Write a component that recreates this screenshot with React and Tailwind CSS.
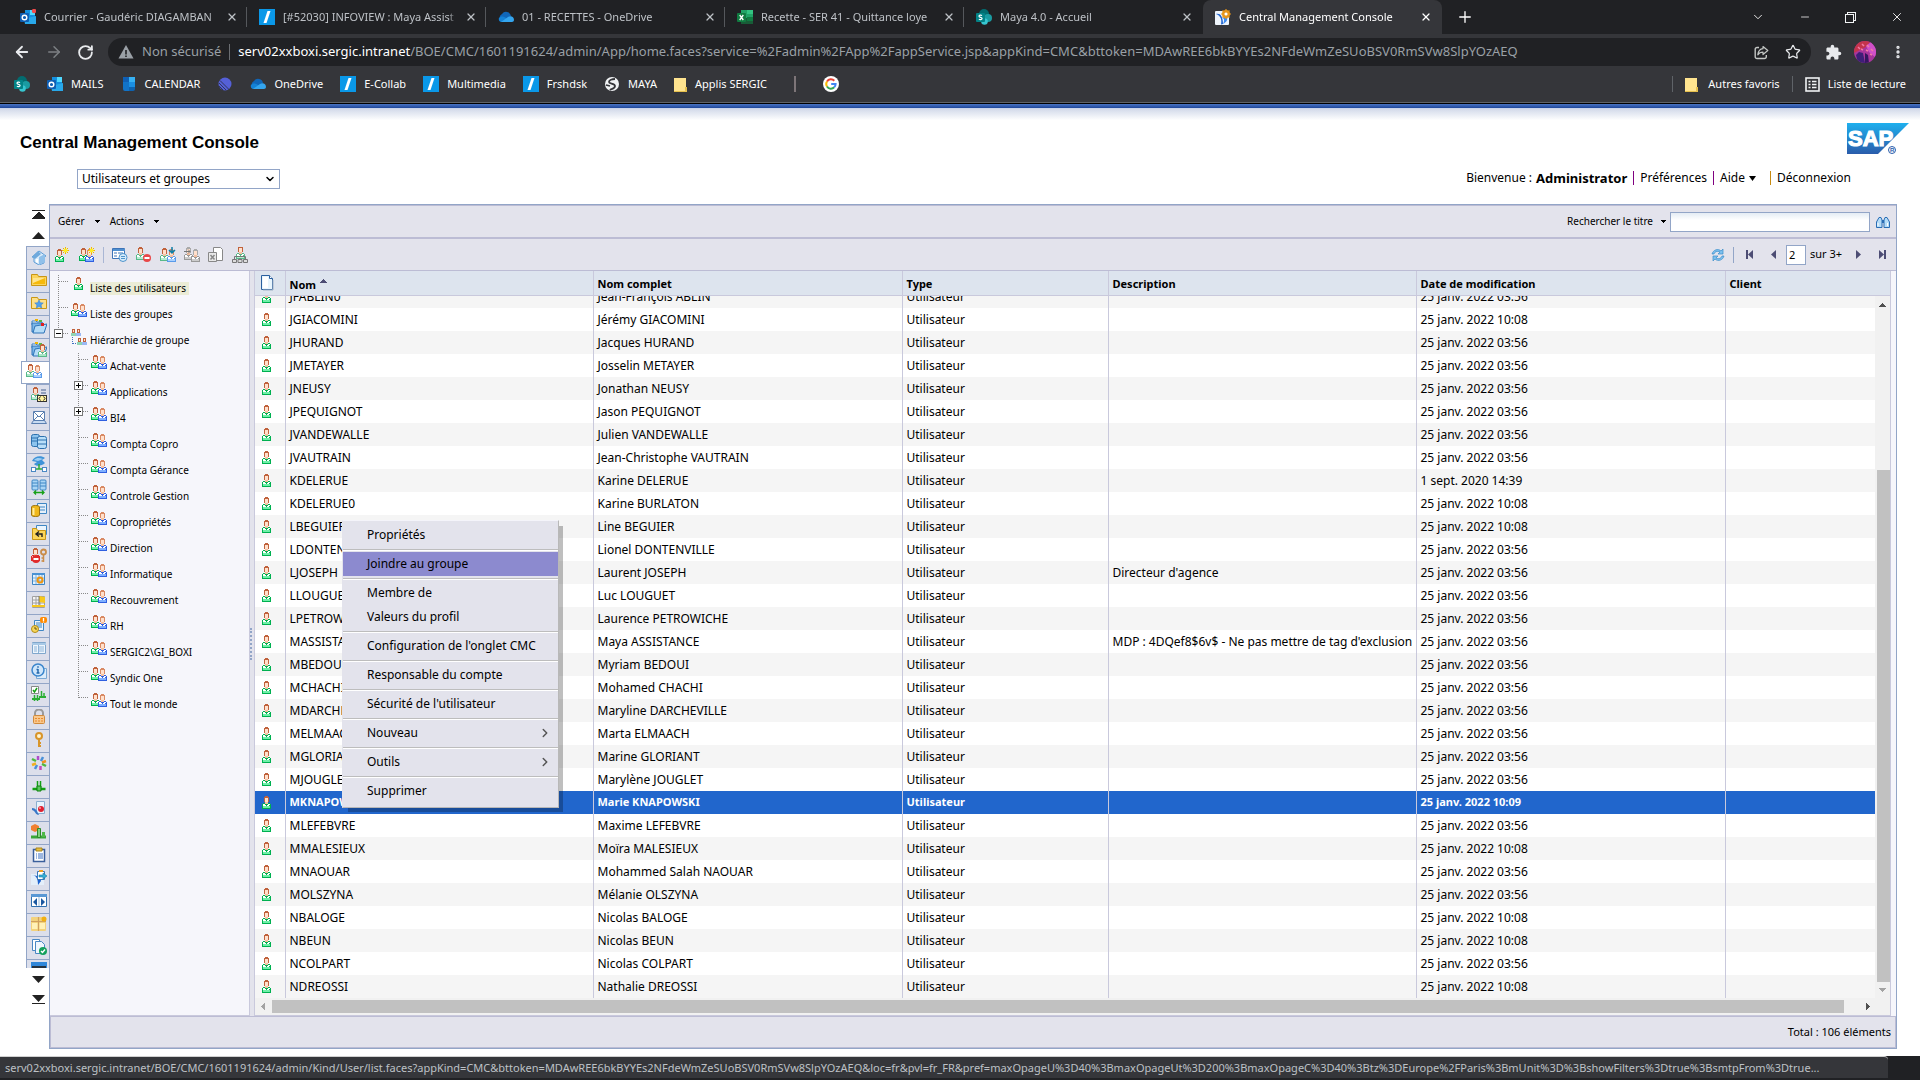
import React from "react";
import { ArrowLeft, ArrowRight, RotateCw, X, Plus, ChevronDown, ChevronRight, Star, MoreVertical, Minus } from "lucide-react";
import { MdExtension } from "react-icons/md";

/* ---------- shared icon pieces ---------- */

function Svg({ w = 16, h = 16, children, crisp = false, className = "" }) {
  return (
    <svg
      width={w}
      height={h}
      viewBox={`0 0 ${w} ${h}`}
      className={`block shrink-0 ${className}`}
      shapeRendering={crisp ? "crispEdges" : "auto"}
      aria-hidden="true"
    >
      {children}
    </svg>
  );
}

function Person({ x = 0, y = 0, body = "#00b050", fill = "#6ef0a8", hair = "#c0623c" }) {
  return (
    <g transform={`translate(${x} ${y})`} shapeRendering="crispEdges">
      <path d="M3 0h3v1h1v5h-1v1h-3v-1h-1v-5h1z" fill={hair} />
      <path d="M3 2h3v4h-3z" fill="#ffe0cc" />
      <path d="M3 6h3v2h-3z" fill="#f4c0a0" />
      <path d="M1 7h2v1h3v-1h2v1h1v5h-9v-5h1z" fill={body} />
      <path d="M1 8h2v1h1v1h1v-1h1v-1h2v1h-1v3h-6v-3h-1z" fill="#fff" />
      <path d="M1 10h7v2h-7z" fill={fill} />
    </g>
  );
}

function UserIcon() {
  return <Svg w={9} h={13} crisp><Person /></Svg>;
}

function GroupIcon({ soft = false }) {
  return (
    <Svg w={16} h={15} crisp>
      <Person body={soft ? "#58b98a" : "#00b050"} fill={soft ? "#a9e6c6" : "#6ef0a8"} />
      <Person x={7} y={1} body={soft ? "#5a9bea" : "#2f5fe0"} fill={soft ? "#a9d0ff" : "#7fb0ff"} hair="#d98a64" />
    </Svg>
  );
}

function HierarchyIcon() {
  const Small = ({ x, y }) => (
    <g transform={`translate(${x} ${y})`}>
      <path d="M1 0h3v4h-3z" fill="#c0623c" /><path d="M2 1h1v2h-1z" fill="#ffe0cc" /><path d="M0 4h5v3h-5z" fill="#8fd4b4" />
      <path d="M6 0h3v4h-3z" fill="#c0623c" /><path d="M7 1h1v2h-1z" fill="#ffe0cc" /><path d="M5 4h5v3h-5z" fill="#9ab8f4" />
    </g>
  );
  return (
    <Svg w={16} h={16} crisp>
      <Small x={0} y={0} /><Small x={6} y={9} />
      <path d="M1.5 8v7M2 14.5h4" stroke="#3d6fc0" strokeDasharray="1 1" fill="none" />
    </Svg>
  );
}

const sheetLine = "#3f86c4";

/* ---------- browser icons ---------- */

function Outlook({ dot = false }) {
  return (
    <Svg>
      <path d="M5 1h10v13H5z" fill="#1490df" /><path d="M10 1h5v5h-5z" fill="#50d9ff" /><path d="M4 10l12-3v8H5z" fill="#28a8ea" />
      <rect x="0" y="4" width="9" height="9" rx="1" fill="#0f5fb4" />
      <circle cx="4.5" cy="8.5" r="2.3" fill="none" stroke="#fff" strokeWidth="1.4" />
      {dot && <circle cx="14" cy="2" r="2.2" fill="#ef4b4b" />}
    </Svg>
  );
}
function Slash() {
  return <Svg><rect width="16" height="16" fill="#0a98e8" /><path d="M8.5 2h3L7.5 14h-3z" fill="#fff" /></Svg>;
}
function Cloud() {
  return (
    <Svg>
      <path d="M2 10a4 4 0 0 1 2-5 5 5 0 0 1 9 2l-5 4z" fill="#1066b8" />
      <path d="M1 9c3-3 6-1 8 1l-1 3H3a3 3 0 0 1-2-4z" fill="#1482d6" />
      <path d="M3 13l7-5c3-2 6 0 6 3 0 1-1 2-2 2z" fill="#34a5ee" />
    </Svg>
  );
}
function Excel() {
  return (
    <Svg>
      <path d="M4 1h12v14H4z" fill="#21a366" /><path d="M10 1h6v4h-6z" fill="#33c481" /><path d="M4 9h12v6H4z" fill="#185c37" /><path d="M10 8h6v4h-6z" fill="#107c41" />
      <rect y="4" width="9" height="9" rx="1" fill="#107c41" /><path d="M2.7 6l3.6 5M6.3 6l-3.6 5" stroke="#fff" strokeWidth="1.3" />
    </Svg>
  );
}
function SharePoint() {
  return (
    <Svg>
      <circle cx="8" cy="5" r="5" fill="#036c70" /><circle cx="12" cy="9" r="4" fill="#1a9ba1" /><circle cx="8.5" cy="12.5" r="3.3" fill="#37c6d0" />
      <rect y="4" width="9" height="9" rx="1" fill="#038387" />
      <path d="M6 6.6c-1-.8-3-.6-3 .6 0 1.400 3.100.8 3.100 2.300 0 1.200-2.200 1.500-3.200.6" fill="none" stroke="#fff" strokeWidth="1.200" />
    </Svg>
  );
}
function BoIcon() {
  return (
    <Svg>
      <rect y="2" width="14" height="14" rx="1" fill="#eef4fb" />
      <path d="M1 5c4-1 7 2 7 10l-2 .500C7 11 6 7 1 5z" fill="#1d62d0" /><path d="M7 9c2 0 3 2 1 6 4-2 5-5 4-8z" fill="#3b8af0" />
      <circle cx="11" cy="5" r="3" fill="none" stroke="#e8961c" strokeWidth="2" />
      <path d="M11 0v10M6 5h10M7.500 1.500l7 7M14.500 1.500l-7 7" stroke="#e8961c" strokeWidth="1.200" />
      <circle cx="11" cy="5" r="1.500" fill="#fff" />
    </Svg>
  );
}
function Calendar() {
  return (
    <Svg>
      <path d="M2 1h12v10H2z" fill="#1a8fe3" /><path d="M2 1h6v5H2z" fill="#0f5fb4" /><path d="M8 1h6v5H8z" fill="#36b1f3" /><path d="M2 6h6v9H4a2 2 0 0 1-2-2z" fill="#1173c7" /><path d="M8 11h6v2a2 2 0 0 1-2 2H8z" fill="#0d62b0" />
    </Svg>
  );
}
function Sphere() {
  return (
    <Svg>
      <circle cx="8" cy="8" r="6.500" fill="#5560d8" />
      <path d="M2 7l7 7M2 10l4 4M3 4.500l9 9" stroke="#303660" strokeWidth="1" />
    </Svg>
  );
}
function Globe() {
  return (
    <Svg>
      <circle cx="8" cy="8" r="7" fill="#f1f3f4" />
      <path d="M11 3c-3 0-6 1-6 3s6 1 6 4-4 3-5 4M2 9l4 1" stroke="#35363a" strokeWidth="1.800" fill="none" />
    </Svg>
  );
}
function FolderMark() {
  return (
    <Svg w={13} h={15}>
      <path d="M0 1h12v9h1v5H0z" fill="#ffe48f" /><path d="M0 14h13v1H0zM11 10h2v5h-2z" fill="#e6c04e" />
    </Svg>
  );
}
function Google() {
  return (
    <Svg>
      <circle cx="8" cy="8" r="8" fill="#fff" />
      <g fill="none" strokeWidth="2">
        <path d="M4 5.500A4.600 4.600 0 0 1 11.300 4.800" stroke="#ea4335" />
        <path d="M4 5.500a4.600 4.600 0 0 0 0 5" stroke="#fbbc05" />
        <path d="M4 10.500a4.600 4.600 0 0 0 7.200.8" stroke="#34a853" />
        <path d="M11.200 11.300A4.600 4.600 0 0 0 12.600 8H8.200" stroke="#4285f4" />
      </g>
    </Svg>
  );
}
function Avatar() {
  return (
    <Svg w={22} h={22}>
      <clipPath id="avatar"><circle cx="11" cy="11" r="11" /></clipPath>
      <g clipPath="url(#avatar)">
        <rect width="22" height="22" fill="#a8359c" />
        <path d="M0 0h17l-5 6-12 6z" fill="#c4344c" /><path d="M12 5l5-4 5 6v10l-7-6z" fill="#d050c8" />
        <path d="M2 14l3-3 4 1 2 10H4z" fill="#3f1f78" /><path d="M11 12l3 2 1 8h-4z" fill="#351560" />
        <path d="M4 6l2 2M8 3l2 2M13 4l2 2M17 8l2 2M7 8l2 1M12 9l2 1M16 13l2 1" stroke="#f07aa4" strokeWidth="1.500" />
      </g>
    </Svg>
  );
}
function ShareArrow() {
  return (
    <Svg w={15} h={15}>
      <path d="M5 2.500H3a1.800 1.800 0 0 0-1.800 1.800v7.400A1.800 1.800 0 0 0 3 13.500h7.500a1.800 1.800 0 0 0 1.800-1.800V10" fill="none" stroke="currentColor" strokeWidth="1.400" />
      <path d="M9 1.500L13.800 5.500 9 9.500V7.200C6.800 7.200 5 8 3.800 9.800 4.200 6.500 6 4 9 3.700z" fill="none" stroke="currentColor" strokeWidth="1.200" strokeLinejoin="round" />
    </Svg>
  );
}
function WarningTriangle() {
  return (
    <Svg>
      <path d="M8 1l7.500 13.500H.5z" fill="#9aa0a6" /><path d="M7.200 6h1.600v4.500H7.200zM7.200 11.500h1.600V13H7.200z" fill="#202124" />
    </Svg>
  );
}
function ReadingList() {
  return (
    <Svg w={15} h={15}>
      <rect x="1" y="1" width="13" height="13" fill="none" stroke="#f1f3f4" strokeWidth="1.600" />
      <path d="M3.500 4.500h2M7 4.500h4.500M3.500 7.500h2M7 7.500h4.500M3.500 10.500h2M7 10.500h4.500" stroke="#f1f3f4" strokeWidth="1.400" />
    </Svg>
  );
}
function Restore() {
  return <Svg w={11} h={11} crisp><path d="M.5 2.500h8v8h-8zM2.500 2.500v-2h8v8h-2" fill="none" stroke="#f1f3f4" /></Svg>;
}

/* ---------- navigation strip icons ---------- */

const folderBlue = (
  <>
    <path d="M1 3h4l1 1h5v3H1z" fill="#fff" stroke="#3b7fc0" />
    <path d="M1 5h11v9H1z" fill="#7db7e8" stroke="#2f74b8" />
    <path d="M4 1h3v2H4z" fill="#f2b400" /><path d="M8 2h3v2H8z" fill="#58b947" />
    <path d="M4 8l12-2-3 9H2z" fill="#b5dcf7" stroke="#2f74b8" />
  </>
);

const stripIcons = [
  ["Accueil", <><path d="M1 8l7-6 7 5-2 1v6l-5 2-5-3V8z" fill="#d9ebfa" stroke="#5b9bd5" /><path d="M1 8l6-6 3 3-6 5z" fill="#6fa9dc" /><path d="M8 8l6-3v8l-6 3z" fill="#8fc0ea" /><path d="M5 10h2v4l-2-1z" fill="#fff" /></>],
  ["Dossiers", <><path d="M.500 13.500v-11h6l1 2h8v9z" fill="#fbd45c" stroke="#c99716" /><path d="M2 6h12v6H2z" fill="#f6b90a" /><path d="M2 6h12l-12 5z" fill="#ffe58f" /></>],
  ["Dossiers personnels", <><path d="M.500 13.500v-11h6l1 2h8v9z" fill="#fde08a" stroke="#c99716" /><path d="M8 5l1.300 2.700 3 .3-2.200 2 .6 3L8 11.600 5.300 13l.6-3-2.200-2 3-.3z" fill="#4da0f0" stroke="#3478c8" strokeWidth=".5" /></>],
  ["Catégories", <>{folderBlue}<path d="M10 5h3v3h-3z" fill="#e02020" /></>],
  ["Catégories personnelles", <>{folderBlue}<Person x={7} y={3} body="#58b98a" fill="#a9e6c6" /></>],
  ["Utilisateurs et groupes", null],
  ["Niveaux d'accès", <><Person body="#58b98a" fill="#bfeed4" /><path d="M10 3h5M10 6h5" stroke="#44608f" /><rect x="6.500" y="8.500" width="9" height="6" fill="#fff3a0" stroke="#333" /><path d="M9.500 9.500L8 11.500l1.500 2M12.500 9.500l1.500 2-1.500 2" stroke="#222" fill="none" /></>],
  ["Boîtes de réception", <><path d="M2.500 1.500h11v9h-11z" fill="#fff" stroke="#5a7fb0" /><path d="M3 2l5 5 5-5M3 10l4-4M13 10L9 6" stroke="#5a7fb0" fill="none" /><path d="M.500 13.500l2-3h11l2 3z" fill="#c8dcf2" stroke="#5a7fb0" /></>],
  ["Serveurs", <><rect x=".5" y="1.500" width="8" height="12" rx="2" fill="#8cc4ee" stroke="#2d71ae" /><rect x="6.500" y="3.500" width="9" height="12" rx="2" fill="#b9dff9" stroke="#2d71ae" /><path d="M1 5h6M1 8h5M7 7h8M7 11h8" stroke="#2d71ae" /></>],
  ["Univers", <><path d="M1 5c2-5 9-6 13-3l-3 2 3 3c-3 3-9 4-11 1l3-2z" fill="#3e93d8" /><path d="M3 4c3-3 6-2 9-1l-5 2z" fill="#9dcef3" /><path d="M8 8v5M5 13h6" stroke="#2bab3c" strokeWidth="1.500" /><rect x=".5" y="11.500" width="4" height="4" fill="#fff" stroke="#4a88c4" /><rect x="11.500" y="11.500" width="4" height="4" fill="#fff" stroke="#4a88c4" /></>],
  ["Connexions", <><rect x="1" y="1" width="6" height="10" rx="1" fill="#a9d5f5" stroke="#3f86c4" /><rect x="9" y="1" width="6" height="10" rx="1" fill="#a9d5f5" stroke="#3f86c4" /><path d="M1 4h6M1 7h6M9 4h6M9 7h6" stroke="#3f86c4" /><path d="M3 13.500h10M5 11.500l-2 2 2 2M11 11.500l2 2-2 2" stroke="#18a018" strokeWidth="1.300" fill="none" /></>],
  ["Connexions OLAP", <><path d="M6.500 1.500h9v10h-9z" fill="#e5effa" stroke={sheetLine} /><path d="M9 5h5M9 8h5" stroke={sheetLine} /><path d="M.500 5c0-2 8-2 8 0v8c0 2-8 2-8 0z" fill="#f0b81c" stroke="#9c7410" /><path d="M2.500 6v7" stroke="#ffec9c" strokeWidth="2" /></>],
  ["Réplication", <><path d="M5.500.5h10v9h-10z" fill="#eaf4fd" stroke={sheetLine} /><path d="M1.500 14.500v-11h4l1 2h8v9z" fill="#fcd65a" stroke="#c99716" /><path d="M11 12V9H6M8 6.500L5 9l3 2.500" stroke="#222" strokeWidth="1.400" fill="none" /></>],
  ["Clés de session", <><Person body="#e02a2a" fill="#ff7070" /><circle cx="5" cy="11" r="4" fill="#e02a2a" /><path d="M2.500 10h5v2h-5z" fill="#fff" /><circle cx="12.500" cy="4" r="2.500" fill="none" stroke="#c98c48" strokeWidth="1.800" /><path d="M12.500 6v8M12.500 10h-2M12.500 13h-2" stroke="#c98c48" strokeWidth="1.500" /></>],
  ["Calendriers", <><path d="M1.500 2.500h12v11h-12z" fill="#e5f2fd" stroke={sheetLine} /><path d="M1 2h13v2H1z" fill="#4b92d4" /><path d="M2 7h11M2 10h11M5 4v9M8 4v9M11 4v9" stroke="#7fb3e0" /><circle cx="9" cy="9" r="2.500" fill="none" stroke="#f0940c" strokeWidth="2" /></>],
  ["Événements", <><path d="M1.500 2.500h12v11h-12z" fill="#f4f4f4" stroke="#a0a0a0" /><path d="M2 6h11M2 9h11M5 3v10M9 3v10" stroke="#a0a0a0" /><path d="M8 2l6 1v6l-6-1z" fill="#f7c81c" /><path d="M8 2v9" stroke="#777" /><path d="M1 11h13v2H1z" fill="#f7c81c" /></>],
  ["Alertes", <><path d="M3.500 3.500h9v10h-9z" fill="#e9f3fc" stroke={sheetLine} /><path d="M5 6h6M5 8h6M5 10h6" stroke={sheetLine} /><rect x="9" width="7" height="6" rx="2" fill="#ff8a00" /><path d="M12.500 1v3M12.500 4.500v1" stroke="#fff" strokeWidth="1.300" /><circle cx="4" cy="12" r="3.500" fill="#f7d75a" stroke="#b08a18" /><path d="M4 10v2h2" stroke="#6b5310" fill="none" /></>],
  ["Applications", <><path d="M1.500 2.500h13v11h-13z" fill="#eef6fd" stroke="#7fa7cc" /><path d="M1 3h14v2H1z" fill="#a8c9e6" /><path d="M3 7h3M3 9h3M3 11h3M8 7h5M8 9h5M8 11h5M7.500 5v8" stroke="#8db4d8" /></>],
  ["Informations", <><path d="M5.500 5.500h10v10h-10z" fill="#dcecfa" stroke="#7aa8d4" /><circle cx="7" cy="7" r="6" fill="#cfe6fb" stroke="#3a85cc" strokeWidth="1.500" /><path d="M7 6v4M5.500 10h3M5.500 6.500H7M7 3.300v1.400" stroke="#2468ac" strokeWidth="1.500" /></>],
  ["Audit", <><path d="M.500.500h7v7h-7z" fill="#fff" stroke="#888" /><path d="M2 4l1.500 2L6 2" stroke="#16a016" fill="none" strokeWidth="1.500" /><path d="M1 13h8M8 11h7" stroke="#2aae34" strokeWidth="2" /><path d="M3.500 9v6M6.500 9v6M10.500 5v6M13 7v4" stroke="#2aae34" strokeWidth="1.500" /></>],
  ["Autorisation", <><path d="M4 7V4a4 3.500 0 0 1 8 0v3" fill="none" stroke="#9a9a9a" strokeWidth="2" /><rect x="2.500" y="6.500" width="11" height="8" rx="1" fill="#f9c88c" stroke="#d08a3c" /><path d="M4 9.500h8M4 12h8" stroke="#e88a30" strokeDasharray="2 1" /></>],
  ["Clés de licence", <><circle cx="8" cy="4" r="3" fill="#fff4d0" stroke="#d8952a" strokeWidth="2" /><path d="M8 7v8M8 11h2M8 14h2" stroke="#d8952a" strokeWidth="2" /></>],
  ["Visual Difference", <g strokeWidth="2.500"><path d="M7 1v4" stroke="#b04cc8" /><path d="M12 2l-2 4" stroke="#4a90d8" /><path d="M15 6l-4 1.500" stroke="#f09020" /><path d="M15 11l-4-2" stroke="#4fb840" /><path d="M9.500 15v-4" stroke="#c848b8" /><path d="M4 14l2-4" stroke="#4a90d8" /><path d="M1 10l4-1.500" stroke="#f0b020" /><path d="M1 4l4 2" stroke="#4fb840" /></g>],
  ["Fédération", <><path d="M1.500 11h13" stroke="#12a012" strokeWidth="2.500" /><path d="M6.500 3v7M9.500 3v7" stroke="#12a012" strokeWidth="1.500" /><path d="M6 8h4v5H6z" fill="#5cc85c" stroke="#0a800a" /></>],
  ["Profils", <><path d="M5.500.5h8v12h-8z" fill="#e9f3fc" stroke="#8aaed0" /><path d="M1 7c4 0 5 3 7 7-4 0-3-4-7-5z" fill="#3a78c8" /><circle cx="10" cy="8" r="3" fill="#e02030" /><circle cx="9" cy="7" r="1" fill="#ff9aa0" /></>],
  ["Surveillance", <><path d="M0 2l4-2 4 2v4L4 8 0 6z" fill="#f08030" /><path d="M0 13h15" stroke="#3aa838" strokeWidth="3" /><path d="M6.500 4.500h3v9h-3z" fill="#7fd07a" stroke="#2d8a2a" /><path d="M11 8h3v5h-3z" fill="#4fb84a" /></>],
  ["Gestion des promotions", <><path d="M2.500 2.500h11v12h-11z" fill="#fff" stroke="#3a5f9c" strokeWidth="1.500" /><path d="M5 1h6v3H5z" fill="#e8c040" stroke="#a8841c" /><path d="M5 7h1M7 7h5M5 9h1M7 9h5M5 11h1M7 11h5" stroke="#3a6fc0" /></>],
  ["Gestion des versions", <><rect y="4" width="13" height="11" fill="#e4effa" /><path d="M0 5c5 0 7 3 7 10l3-4c0-3-4-6-10-6z" fill="#1d62d0" /><path d="M6.500 1.500h7v8h-7z" fill="#fff" stroke="#3a78b8" /><path d="M8 5h4V3l4 3-4 3V7H8z" fill="#35b0d8" stroke="#1b7ea8" strokeWidth=".6" /><path d="M8 0h4v2H8z" fill="#f0a020" /></>],
  ["Différences", <><path d="M.500 1.500h15v12h-15z" fill="#fff" stroke="#2f6fb0" /><path d="M0 1h16v3H0z" fill="#5a98d4" /><path d="M2 9l4-4v8zM14 9l-4-4v8z" fill="#1c58a0" /><path d="M8 4v9" stroke="#9dbddb" /></>],
  ["Gestion des instances", <><rect y="1" width="15" height="14" rx="1" fill="#f3d27c" /><path d="M7.500 1v14M0 5.500h15" stroke="#cfa060" strokeWidth="1.200" /><path d="M1 7h5.500v6H1zM8.500 7H14v6H8.500z" fill="#fff1b8" /><circle cx="13" cy="3" r="2.500" fill="#f2b010" /></>],
  ["Documents", <><path d="M1.500.5h7v11h-7z" fill="#fff" stroke="#4a88c4" /><path d="M4.500 2.500h6l3 3v9h-9z" fill="#eef6fd" stroke="#4a88c4" /><circle cx="12" cy="12" r="4" fill="#14a05c" /><path d="M10 12l1.500 1.500L14 10.500" stroke="#fff" fill="none" strokeWidth="1.400" /></>],
  ["Console", <><rect width="16" height="12" fill="#2f86d8" /><path d="M1 4h14v8H1z" fill="#26323e" /></>],
];

function NavStrip() {
  return (
    <nav aria-label="Sections" className="flex w-[49px] shrink-0 flex-col items-end">
      <div className="flex h-[42px] w-[22px] shrink-0 flex-col items-center gap-3 pt-1.5">
        <Svg w={13} h={10} crisp><path d="M0 0h13v1H0z" fill="#222" /><path d="M6 2h1l6 6v1H0V8z" fill="#222" /></Svg>
        <Svg w={13} h={7}><path d="M6.500 0L13 7H0z" fill="#222" /></Svg>
      </div>
      <ul className="flex min-h-0 flex-1 flex-col items-end overflow-hidden">
        {stripIcons.map(([label, icon]) =>
          icon ? (
            <li key={label} className="h-[23px] w-[23px] shrink-0 border-t border-l border-[#92a5c7] bg-[#dcdfeb]">
              <button aria-label={label} title={label} className="flex h-full w-full justify-end pt-0.5 pr-0.5"><Svg>{icon}</Svg></button>
            </li>
          ) : (
            <li key={label} className="h-[23px] w-7 shrink-0 border-y border-l border-[#92a5c7] bg-white">
              <button aria-label={label} aria-current="page" className="block pt-0.5 pl-1"><GroupIcon soft /></button>
            </li>
          )
        )}
      </ul>
      <div className="flex h-[81px] w-[22px] shrink-0 flex-col items-center gap-3 pt-2">
        <Svg w={13} h={7}><path d="M6.500 7L13 0H0z" fill="#222" /></Svg>
        <Svg w={13} h={9}><path d="M6.500 7L13 0H0zM0 8h13v1H0z" fill="#222" /></Svg>
      </div>
    </nav>
  );
}

/* ---------- browser chrome ---------- */

const tabs = [
  [<Outlook dot />, "Courrier - Gaudéric DIAGAMBAN"],
  [<Slash />, "[#52030] INFOVIEW : Maya Assist"],
  [<Cloud />, "01 - RECETTES - OneDrive"],
  [<Excel />, "Recette - SER 41 - Quittance loye"],
  [<SharePoint />, "Maya 4.0 - Accueil"],
  [<BoIcon />, "Central Management Console"],
];

const bookmarks = [
  [<SharePoint />, ""],
  [<Outlook />, "MAILS"],
  [<Calendar />, "CALENDAR"],
  [<Sphere />, ""],
  [<Cloud />, "OneDrive"],
  [<Slash />, "E-Collab"],
  [<Slash />, "Multimedia"],
  [<Slash />, "Frshdsk"],
  [<Globe />, "MAYA"],
  [<FolderMark />, "Applis SERGIC"],
];

function Browser() {
  return (
    <header className="shrink-0 bg-[#35363a] font-['Noto_Sans',sans-serif] text-[#e8eaed]">
      <div className="flex h-[34px] items-stretch bg-[#202124] pl-2 text-[11px]">
        {tabs.map(([icon, title], i) => {
          const active = i === tabs.length - 1;
          return (
            <div
              key={title}
              className={
                active
                  ? "flex w-[239px] items-center gap-2 rounded-t-lg bg-[#35363a] pr-2.5 pl-3 text-white"
                  : i < 4
                    ? "flex w-[239px] items-center gap-2 pl-3 text-[#bdc1c6]"
                    : "flex w-[239px] items-center gap-2 pr-2.5 pl-3 text-[#bdc1c6]"
              }
            >
              {icon}
              <span className="min-w-0 flex-1 mask-r-from-95% whitespace-nowrap">{title}</span>
              <button aria-label="Fermer l'onglet" className="shrink-0"><X size={12} strokeWidth={2.500} /></button>
              {i < 4 && <span className="h-5 w-px shrink-0 bg-[#55585c]" />}
            </div>
          );
        })}
        <button aria-label="Nouvel onglet" className="ml-3.5 text-white"><Plus size={18} strokeWidth={1.800} /></button>
        <div className="ml-auto flex items-center gap-[34px] pr-4 text-white">
          <ChevronDown size={14} strokeWidth={1.500} />
          <button aria-label="Réduire"><Minus size={12} strokeWidth={1.500} /></button>
          <button aria-label="Restaurer"><Restore /></button>
          <button aria-label="Fermer"><X size={14} strokeWidth={1.500} /></button>
        </div>
      </div>
      <div className="flex h-9 items-center pr-3.5 pl-[13px]">
        <button aria-label="Précédent"><ArrowLeft size={18} strokeWidth={2.400} /></button>
        <button aria-label="Suivant" className="ml-3.5 text-[#7d8084]"><ArrowRight size={18} strokeWidth={2} /></button>
        <button aria-label="Actualiser" className="mr-3.5 ml-3.5"><RotateCw size={17} strokeWidth={2.600} /></button>
        <div className="flex h-7 min-w-0 flex-1 items-center rounded-full bg-[#202124] pr-2.5 pl-2.5 text-[13px] whitespace-nowrap">
          <WarningTriangle />
          <span className="ml-2 text-[#9aa0a6]">Non sécurisé</span>
          <span className="mx-2 h-4 w-px bg-[#6b6e72]" />
          <span className="min-w-0 flex-1 overflow-hidden text-[#9aa0a6]">
            <span className="text-white">serv02xxboxi.sergic.intranet</span>/BOE/CMC/1601191624/admin/App/home.faces?service=%2Fadmin%2FApp%2FappService.jsp&amp;appKind=CMC&amp;bttoken=MDAwREE6bkBYYEs2NFdeWmZeSUoBSV0RmSVw8SlpYOzAEQ
          </span>
          <button aria-label="Partager" className="mr-4 text-[#c4c7c5]"><ShareArrow /></button>
          <button aria-label="Ajouter aux favoris" className="text-[#e8eaed]"><Star size={16} strokeWidth={1.800} /></button>
        </div>
        <button aria-label="Extensions" className="ml-3.5"><MdExtension size={17} /></button>
        <button aria-label="Profil" className="ml-3"><Avatar /></button>
        <button aria-label="Menu" className="ml-3.5"><MoreVertical size={16} strokeWidth={3} /></button>
      </div>
      <div className="flex h-[33px] items-center gap-[17px] border-b border-[#5f6368] pr-3.5 pb-1 pl-3.5 text-[11px] text-white">
        {bookmarks.map(([icon, label], i) => (
          <a key={i} href="#" aria-label={label || "Favori"} className="flex items-center gap-2">{icon}{label}</a>
        ))}
        <span className="mx-2.5 h-4 w-0.5 bg-[#7d7578]" />
        <a href="#" aria-label="Google"><Google /></a>
        <div className="ml-auto flex items-center gap-3">
          <span className="h-4 w-px bg-[#5f6368]" />
          <a href="#" className="flex items-center gap-2.5"><FolderMark />Autres favoris</a>
          <span className="h-4 w-px bg-[#5f6368]" />
          <a href="#" className="flex items-center gap-2"><ReadingList />Liste de lecture</a>
        </div>
      </div>
    </header>
  );
}

/* ---------- page header ---------- */

function Banner() {
  return (
    <div className="flex h-[95px] shrink-0 justify-between bg-linear-to-b from-[#d3daea] to-white to-12% pr-[11px]">
      <div className="pt-[22px] pl-5">
        <h1 className="font-['Liberation_Sans',sans-serif] text-[17px] leading-6 font-bold">Central Management Console</h1>
        <div className="relative mt-3.5 ml-[57px] w-[203px]">
          <select aria-label="Section" className="block h-5 w-full appearance-none border border-[#92a5c7] bg-white pl-1 text-[12px] leading-4">
            <option>Utilisateurs et groupes</option>
          </select>
          <ChevronDown size={12} strokeWidth={3} className="pointer-events-none absolute top-1 right-1" />
        </div>
      </div>
      <div className="flex flex-col items-end pt-3.5">
        <svg width="62" height="32" viewBox="0 0 62 32" role="img" aria-label="SAP">
          <defs>
            <linearGradient id="sap" x1="0" y1="0" x2="0" y2="1"><stop offset="0" stopColor="#1fb0ee" /><stop offset="1" stopColor="#2a5cab" /></linearGradient>
          </defs>
          <path d="M0 0h62L31 31H0z" fill="url(#sap)" />
          <text x="1" y="23" fontFamily="Liberation Sans, sans-serif" fontWeight="700" fontSize="22" fill="#fff" stroke="#fff" strokeWidth="1.200">SAP</text>
          <circle cx="45" cy="27" r="3.500" fill="none" stroke="#2a5cab" />
          <text x="43" y="29" fontFamily="Liberation Sans, sans-serif" fontWeight="700" fontSize="6" fill="#2a5cab">R</text>
        </svg>
        <div className="mt-[13px] mr-[58px] flex items-center text-[12px] leading-5 whitespace-nowrap">
          <span>Bienvenue :</span>
          <b className="ml-1 text-[13px]">Administrator</b>
          <span className="mx-1.5 h-3.5 w-px bg-[#800080]" />
          <a href="#">Préférences</a>
          <span className="mx-1.5 h-3.5 w-px bg-[#800080]" />
          <button>Aide</button>
          <Svg w={7} h={5} className="ml-1"><path d="M0 0h7L3.500 5z" fill="#000" /></Svg>
          <span className="mr-1.5 ml-3.5 h-3.5 w-px bg-[#c88a10]" />
          <a href="#">Déconnexion</a>
        </div>
      </div>
    </div>
  );
}

/* ---------- toolbars ---------- */

const Caret = ({ className = "" }) => <Svg w={5} h={3} crisp className={className}><path d="M0 0h5L3 3H2z" fill="#000" /></Svg>;

const Sparkle = ({ x, y }) => (
  <g transform={`translate(${x} ${y})`}>
    <path d="M3.500 0v7M0 3.500h7M1 1l5 5M6 1L1 6" stroke="#f0b400" /><circle cx="3.500" cy="3.500" r="2" fill="#ffee20" />
  </g>
);

const tools = [
  ["Créer un utilisateur", <><Person y={2} /><Sparkle x={7} y={0} /></>],
  ["Créer un groupe", <><Person y={1} /><Person x={6} y={2} body="#2f5fe0" fill="#7fb0ff" hair="#d98a64" /><Sparkle x={9} y={0} /></>],
  null,
  ["Propriétés", <><path d="M.500 1.500h12v10H.5z" fill="#fff" stroke="#3d74b8" /><path d="M1 2h12v2H1z" fill="#4f8fd0" /><path d="M2 6h3M2 9h3M6 6h5" stroke="#3d74b8" /><circle cx="11" cy="10.500" r="4" fill="#d6ecfb" stroke="#4f94cc" /><path d="M9 9.500h4M9 11.500h4" stroke="#4f94cc" /></>],
  ["Supprimer", <><Person body="#58b98a" fill="#b5ecd0" /><circle cx="11" cy="11" r="4" fill="#e84848" /><path d="M8.500 10h5v2h-5z" fill="#fff" /></>],
  ["Joindre au groupe", <><Person y={1} body="#58b98a" fill="#b5ecd0" /><Person x={7} y={2} body="#5a9bea" fill="#a9d0ff" hair="#d98a64" /><path d="M12 0v5M9 3l3 3 3-3" stroke="#0c7fa8" strokeWidth="1.500" fill="none" /></>],
  ["Retirer", <><Person y={0} body="#999" fill="#ccc" hair="#aaa" /><Person x={7} y={2} body="#999" fill="#ccc" hair="#aaa" /><path d="M0 4.500h6M4 2.500l2 2-2 2" stroke="#777" fill="none" /></>],
  ["Exclure", <><path d="M5.500.500h7l2 2v11h-9z" fill="#fff" stroke="#888" /><path d="M.500 5.500h8v9h-8z" fill="#e8e8e8" stroke="#888" /><path d="M2.500 8l4 4.500M6.500 8l-4 4.500" stroke="#888" strokeWidth="1.500" /></>],
  ["Relations", <><Person x={4} y={-1} body="#58b98a" fill="#b5ecd0" /><path d="M8 11v2M2.500 13v-3.500h11V13" stroke="#777" fill="none" /><path d="M.500 12.500h4v3h-4zM6 12.500h4v3H6zM11.500 12.500h4v3h-4z" fill="#ddd" stroke="#777" /></>],
];

function Toolbars() {
  return (
    <>
      <div className="flex h-[34px] shrink-0 items-center border-t border-b-2 border-[#bcbcd4] pr-1.5 pl-2 text-[10px]">
        <button className="flex items-center gap-2.5">Gérer<Caret /></button>
        <button className="ml-2.5 flex items-center gap-2.5">Actions<Caret /></button>
        <button className="ml-auto flex items-center gap-2">Rechercher le titre<Caret /></button>
        <input aria-label="Rechercher le titre" className="ml-1 h-5 w-[200px] border border-[#92a5c7] bg-linear-to-b from-[#e4ecf4] to-white to-40% px-1" />
        <button aria-label="Rechercher" className="ml-1.5">
          <Svg w={14} h={12}>
            <path d="M.500 11.500V6L3 1.500h2L6 4v7.500zM13.500 11.500V6L11 1.500H9L8 4v7.500z" fill="#b5dcf8" stroke="#2a6db4" />
            <path d="M6 4h2v3H6z" fill="#2a6db4" /><path d="M2 7v3M11.500 7v3" stroke="#fff" />
          </Svg>
        </button>
      </div>
      <div className="flex h-8 shrink-0 items-center gap-2 border-b border-[#bcbcd4] pr-2.5 pl-[5px] text-[11px]">
        {tools.map((t, i) =>
          t ? <button key={i} aria-label={t[0]}><Svg>{t[1]}</Svg></button> : <span key={i} className="h-4 w-px bg-[#a9b6d4]" />
        )}
        <div className="ml-auto flex items-center">
          <button aria-label="Actualiser">
            <Svg w={14} h={14}>
              <path d="M1 6c1-4 6-6 9-3l2-2v5H7l2-2C7 3 4 3 3 6zM13 8c-1 4-6 6-9 3l-2 2V8h5l-2 2c2 1 5 1 6-2z" fill="#7cc0ee" stroke="#3a8cc8" strokeWidth=".7" />
            </Svg>
          </button>
          <span className="ml-2 h-4 w-px bg-[#92a5c7]" />
          <button aria-label="Première page" className="ml-3"><Svg w={7} h={9}><path d="M0 0h2v9H0zM7 0v9L2 4.500z" fill="#4d4d74" /></Svg></button>
          <button aria-label="Page précédente" className="ml-[18px]"><Svg w={5} h={9}><path d="M5 0v9L0 4.500z" fill="#4d4d74" /></Svg></button>
          <input aria-label="Page" defaultValue="2" className="ml-2.5 h-5 w-5 border border-[#92a5c7] bg-white pl-0.5" />
          <span className="ml-1">sur 3+</span>
          <button aria-label="Page suivante" className="ml-3.5"><Svg w={5} h={9}><path d="M0 0v9l5-4.500z" fill="#4d4d74" /></Svg></button>
          <button aria-label="Dernière page" className="ml-[18px]"><Svg w={7} h={9}><path d="M5 0h2v9H5zM0 0v9l5-4.500z" fill="#4d4d74" /></Svg></button>
        </div>
      </div>
    </>
  );
}

/* ---------- tree ---------- */

const tree = [
  ["Liste des utilisateurs", 0, <UserIcon />],
  ["Liste des groupes", 0, <GroupIcon />],
  ["Hiérarchie de groupe", 0, <HierarchyIcon />, "-"],
  ["Achat-vente", 1, <GroupIcon />],
  ["Applications", 1, <GroupIcon />, "+"],
  ["BI4", 1, <GroupIcon />, "+"],
  ["Compta Copro", 1, <GroupIcon />],
  ["Compta Gérance", 1, <GroupIcon />],
  ["Controle Gestion", 1, <GroupIcon />],
  ["Copropriétés", 1, <GroupIcon />],
  ["Direction", 1, <GroupIcon />],
  ["Informatique", 1, <GroupIcon />],
  ["Recouvrement", 1, <GroupIcon />],
  ["RH", 1, <GroupIcon />],
  ["SERGIC2\\GI_BOXI", 1, <GroupIcon />],
  ["Syndic One", 1, <GroupIcon />],
  ["Tout le monde", 1, <GroupIcon />],
];

function Connector({ last, sign }) {
  return (
    <Svg w={17} h={26} crisp>
      <path d={last ? "M4.500 0v7" : "M4.500 0v26"} stroke="#8a8a8a" strokeDasharray="1 1" />
      <path d="M5 6.500h9" stroke="#8a8a8a" strokeDasharray="1 1" />
      {sign && <rect x="0.500" y="2.500" width="8" height="8" fill="#fff" stroke="#777" />}
      {sign && <path d={sign === "+" ? "M2 6.500h5M4.500 4v5" : "M2 6.500h5"} stroke="#000" />}
    </Svg>
  );
}

function Tree() {
  return (
    <aside className="w-[200px] shrink-0 border-r border-b border-[#c9c9dc] bg-[#f6f6fb] pt-1 text-[10px]">
      <ul>
        {tree.map(([label, level, icon, sign], i) => (
          <li key={label} className={level ? "flex h-[26px] pl-6" : "flex h-[26px] pl-1"}>
            <Connector sign={sign} last={i === 2 || i === tree.length - 1} />
            <a href="#" className="flex h-full items-center">
              <span className={i === 0 ? "flex h-4 w-[19px] justify-start self-start pt-0.5 pl-[3px]" : "flex h-4 w-[19px] self-start pt-0.5"}>{icon}</span>
              <span className={i === 0 ? "bg-[#ebecd6] pr-[3px] leading-[13px]" : "leading-[13px]"}>{label}</span>
            </a>
          </li>
        ))}
      </ul>
    </aside>
  );
}

/* ---------- user table ---------- */

const A = "25 janv. 2022 03:56";
const B = "25 janv. 2022 10:08";
const users = [
  ["JFABLIN0", "Jean-François ABLIN", "", A],
  ["JGIACOMINI", "Jérémy GIACOMINI", "", B],
  ["JHURAND", "Jacques HURAND", "", A],
  ["JMETAYER", "Josselin METAYER", "", A],
  ["JNEUSY", "Jonathan NEUSY", "", A],
  ["JPEQUIGNOT", "Jason PEQUIGNOT", "", A],
  ["JVANDEWALLE", "Julien VANDEWALLE", "", A],
  ["JVAUTRAIN", "Jean-Christophe VAUTRAIN", "", A],
  ["KDELERUE", "Karine DELERUE", "", "1 sept. 2020 14:39"],
  ["KDELERUE0", "Karine BURLATON", "", B],
  ["LBEGUIER", "Line BEGUIER", "", B],
  ["LDONTENVILLE", "Lionel DONTENVILLE", "", A],
  ["LJOSEPH", "Laurent JOSEPH", "Directeur d'agence", A],
  ["LLOUGUET", "Luc LOUGUET", "", A],
  ["LPETROWICHE", "Laurence PETROWICHE", "", A],
  ["MASSISTANCE", "Maya ASSISTANCE", "MDP : 4DQef8$6v$ - Ne pas mettre de tag d'exclusion", A],
  ["MBEDOUI", "Myriam BEDOUI", "", A],
  ["MCHACHI", "Mohamed CHACHI", "", A],
  ["MDARCHEVILLE", "Maryline DARCHEVILLE", "", A],
  ["MELMAACH", "Marta ELMAACH", "", A],
  ["MGLORIANT", "Marine GLORIANT", "", A],
  ["MJOUGLET", "Marylène JOUGLET", "", A],
  ["MKNAPOWSKI", "Marie KNAPOWSKI", "", "25 janv. 2022 10:09"],
  ["MLEFEBVRE", "Maxime LEFEBVRE", "", A],
  ["MMALESIEUX", "Moïra MALESIEUX", "", B],
  ["MNAOUAR", "Mohammed Salah NAOUAR", "", A],
  ["MOLSZYNA", "Mélanie OLSZYNA", "", A],
  ["NBALOGE", "Nicolas BALOGE", "", B],
  ["NBEUN", "Nicolas BEUN", "", B],
  ["NCOLPART", "Nicolas COLPART", "", A],
  ["NDREOSSI", "Nathalie DREOSSI", "", B],
];

function Columns() {
  return (
    <colgroup>
      <col className="w-[30px]" />
      <col className="w-[308px]" />
      <col className="w-[309px]" />
      <col className="w-[206px]" />
      <col className="w-[308px]" />
      <col className="w-[309px]" />
      <col />
    </colgroup>
  );
}

const cell = "overflow-hidden border-r border-[#c9c9dc] py-0 pl-1 text-left whitespace-nowrap";

const menu = [["Propriétés"], ["Joindre au groupe"], ["Membre de", "Valeurs du profil"], ["Configuration de l'onglet CMC"], ["Responsable du compte"], ["Sécurité de l'utilisateur"], ["Nouveau"], ["Outils"], ["Supprimer"]];

function ContextMenu() {
  return (
    <div role="menu" className="absolute top-[249px] left-[87px] w-[217px] border border-t-[#f4f4fa] border-r-[#b8b8b8] border-b-[#b8b8b8] border-l-[#e3e3ec] bg-[#e3e3ec] pt-0.5 pb-1 text-[12px] shadow-[5px_5px_0_-1px_rgba(0,0,0,0.25)]">
      {menu.map((group, i) => (
        <div key={i} className={i ? "mt-0.5 border-t border-[#bdbdbd]" : ""}>
          <div className={i ? "border-t border-white pt-px" : ""}>
            {group.map((label) => (
              <button
                key={label}
                role="menuitem"
                className={
                  label === "Joindre au groupe"
                    ? "flex h-6 w-full items-center justify-between bg-[#8c8acf] pl-6 text-left"
                    : "flex h-6 w-full items-center justify-between pr-1.5 pl-6 text-left"
                }
              >
                {label}
                {(label === "Nouveau" || label === "Outils") && <ChevronRight size={14} strokeWidth={2.500} className="text-[#555]" />}
              </button>
            ))}
          </div>
        </div>
      ))}
    </div>
  );
}

function UserTable() {
  return (
    <section className="relative mr-[5px] flex min-w-0 flex-1 flex-col border-r border-b border-[#c9c9dc] bg-white text-[12px]">
      <table className="w-full shrink-0 table-fixed border-collapse text-[11px]">
        <Columns />
        <thead>
          <tr className="h-6 border-b border-[#c9c9dc] bg-[#dde4ee] leading-5">
            <th className={cell} aria-label="Icône">
              <Svg w={14} h={16} className="ml-0.5">
                <path d="M.500.500h8l3 3v11H.5z" fill="#e8f5fd" stroke="#2a5f9e" /><path d="M8.500.500v3h3" fill="#fff" stroke="#2a5f9e" /><path d="M2 2h5v11H2z" fill="#fff" /><path d="M12 5v10H2" stroke="#9fb0c4" fill="none" />
              </Svg>
            </th>
            <th className={cell}>
              <span className="flex items-center gap-1 pt-1">Nom<Svg w={7} h={4} crisp className="mb-2"><path d="M3 0h1l3 4H0z" fill="#4d4d74" /></Svg></span>
            </th>
            {["Nom complet", "Type", "Description", "Date de modification"].map((h) => <th key={h} className={cell}><span className="block pt-0.5">{h}</span></th>)}
            <th className="pl-1 text-left"><span className="block pt-0.5">Client</span></th>
          </tr>
        </thead>
      </table>
      <div className="flex min-h-0 flex-1">
        <div className="flex min-w-0 flex-1 flex-col justify-end overflow-hidden">
          <table className="w-full table-fixed border-collapse">
            <Columns />
            <tbody>
              {users.map(([id, name, desc, date], i) => (
                <tr key={id} className={id === "MKNAPOWSKI" ? "h-[23px] bg-[#2166cc] text-[11px] font-bold text-white" : i % 2 ? "h-[23px] bg-white" : "h-[23px] bg-[#f5f5f5]"}>
                  <td className="border-r border-[#c9c9dc] py-0 pl-[7px]"><UserIcon /></td>
                  <td className={cell}>{id}</td>
                  <td className={cell}>{name}</td>
                  <td className={cell}>Utilisateur</td>
                  <td className={cell}>{desc}</td>
                  <td className={cell}>{date}</td>
                  <td />
                </tr>
              ))}
            </tbody>
          </table>
        </div>
        <div className="flex w-[15px] shrink-0 flex-col items-center bg-[#f1f1f1] pt-[7px] pb-1.5">
          <Svg w={7} h={4} crisp><path d="M3 0h1l3 4H0z" fill="#505050" /></Svg>
          <div className="mt-[163px] w-[13px] flex-1 self-end bg-[#c1c1c1]" />
          <Svg w={7} h={4} crisp className="mt-1.5"><path d="M3 4h1l3-4H0z" fill="#a3a3a3" /></Svg>
        </div>
      </div>
      <div className="flex h-[17px] shrink-0 items-center bg-[#f1f1f1] pr-5 pl-1.5">
        <Svg w={4} h={7} crisp><path d="M4 0v7L0 4V3z" fill="#a3a3a3" /></Svg>
        <div className="ml-[7px] h-[13px] flex-1 bg-[#c1c1c1]" />
        <Svg w={4} h={7} crisp className="ml-[22px]"><path d="M0 0v7l4-3V3z" fill="#505050" /></Svg>
      </div>
      <ContextMenu />
    </section>
  );
}

/* ---------- page ---------- */

export default function App() {
  return (
    <div className="flex h-screen flex-col overflow-hidden bg-white font-['Noto_Sans',sans-serif] text-black">
      <Browser />
      <div className="h-1.5 shrink-0 border-t border-b border-t-black border-b-[#c9d3ea] bg-linear-to-b from-[#4a74c4] to-[#1f479a]" />
      <Banner />
      <div className="flex min-h-0 flex-1">
        <NavStrip />
        <main className="mr-[23px] flex min-w-0 flex-1 flex-col border border-[#92a5c7] bg-[#e3e3ec]">
          <Toolbars />
          <div className="flex min-h-0 flex-1 bg-[#f6f6fb]">
            <Tree />
            <div className="flex w-[5px] shrink-0 items-center border-r border-[#c9c9dc] bg-[#e3e3ec]">
              <span className="h-8 border-l-2 border-dotted border-[#92a5c7]" />
            </div>
            <UserTable />
          </div>
          <footer className="flex h-8 shrink-0 items-center justify-end border border-[#bcbcd4] pr-1 text-[11px]">Total : 106 éléments</footer>
        </main>
      </div>
      <div className="mt-[7px] h-6 shrink-0 border-b-2 border-[#202124] bg-[#202124] pr-8">
        <div className="truncate rounded-tr-sm border-t border-[#d0d0d0] bg-[#35363a] pr-2 pl-[5px] text-[11px] leading-[21px] text-[#bdc1c6]">
          serv02xxboxi.sergic.intranet/BOE/CMC/1601191624/admin/Kind/User/list.faces?appKind=CMC&amp;bttoken=MDAwREE6bkBYYEs2NFdeWmZeSUoBSV0RmSVw8SlpYOzAEQ&amp;loc=fr&amp;pvl=fr_FR&amp;pref=maxOpageU%3D40%3BmaxOpageUt%3D200%3BmaxOpageC%3D40%3Btz%3DEurope%2FParis%3BmUnit%3D%3BshowFilters%3Dtrue%3BsmtpFrom%3Dtrue...
        </div>
      </div>
    </div>
  );
}
